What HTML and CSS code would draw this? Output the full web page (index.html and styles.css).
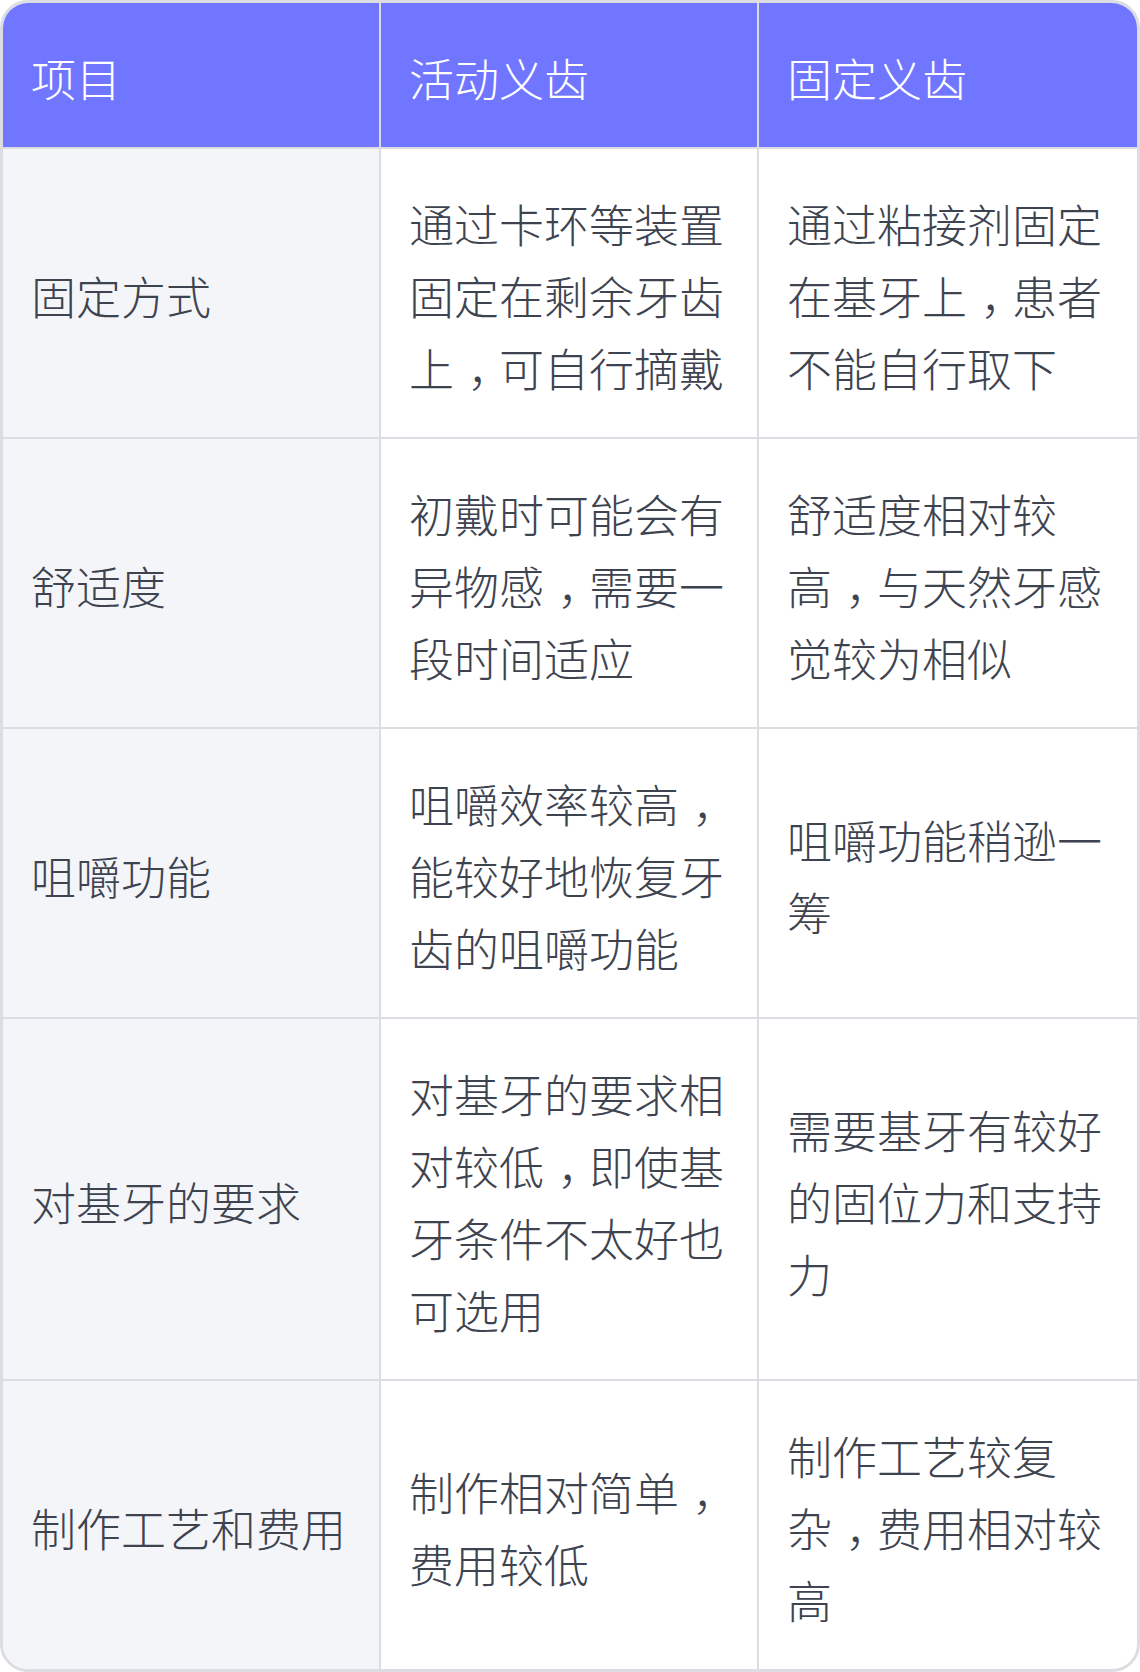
FILE: index.html
```html
<!DOCTYPE html>
<html lang="zh-CN">
<head>
<meta charset="utf-8">
<title>活动义齿与固定义齿对比</title>
<link rel="stylesheet" href="styles.css">
</head>
<body>
<div class="wrap">
  <table class="cmp">
    <thead>
      <tr>
        <th>项目</th>
        <th>活动义齿</th>
        <th>固定义齿</th>
      </tr>
    </thead>
    <tbody>
      <tr>
        <td>固定方式</td>
        <td>通过卡环等装置固定在剩余牙齿上<span class="punc">，</span>可自行摘戴</td>
        <td>通过粘接剂固定在基牙上<span class="punc">，</span>患者不能自行取下</td>
      </tr>
      <tr>
        <td>舒适度</td>
        <td>初戴时可能会有异物感<span class="punc">，</span>需要一段时间适应</td>
        <td>舒适度相对较高<span class="punc">，</span>与天然牙感觉较为相似</td>
      </tr>
      <tr>
        <td>咀嚼功能</td>
        <td>咀嚼效率较高<span class="punc">，</span>能较好地恢复牙齿的咀嚼功能</td>
        <td>咀嚼功能稍逊一筹</td>
      </tr>
      <tr>
        <td>对基牙的要求</td>
        <td>对基牙的要求相对较低<span class="punc">，</span>即使基牙条件不太好也可选用</td>
        <td>需要基牙有较好的固位力和支持力</td>
      </tr>
      <tr>
        <td>制作工艺和费用</td>
        <td>制作相对简单<span class="punc">，</span>费用较低</td>
        <td>制作工艺较复杂<span class="punc">，</span>费用相对较高</td>
      </tr>
    </tbody>
  </table>
</div>
</body>
</html>
```

FILE: styles.css
```css
html, body {
  margin: 0;
  padding: 0;
  background: #ffffff;
}

.wrap {
  border: 3px solid #dcdde2;
  border-radius: 28px;
  overflow: hidden;
  background: #ffffff;
}

.cmp {
  width: 100%;
  table-layout: fixed;
  border-collapse: separate;
  border-spacing: 0;
  font-family: "Noto Sans CJK SC", "Noto Sans", sans-serif;
  font-weight: 300;
  font-size: 45px;
  line-height: 72px;
}

.cmp th,
.cmp td {
  padding: 39px 28px 33px;
  text-align: left;
  vertical-align: middle;
  border-right: 2px solid #dcdde2;
  border-bottom: 2px solid #dcdde2;
}

.cmp th:last-child,
.cmp td:last-child {
  border-right: none;
}

.cmp tbody tr:last-child td {
  border-bottom: none;
}

.cmp th {
  background: #7076ff;
  color: #ffffff;
  font-weight: 300;
}

.cmp td {
  color: #3e4350;
}

.cmp td:first-child {
  background: #f4f5f9;
}

/* fullwidth comma drawn centred in its em box, as in the reference */
.punc {
  font-feature-settings: "halt" 1;
  padding: 0 0.2em 0 0.3em;
}
```
